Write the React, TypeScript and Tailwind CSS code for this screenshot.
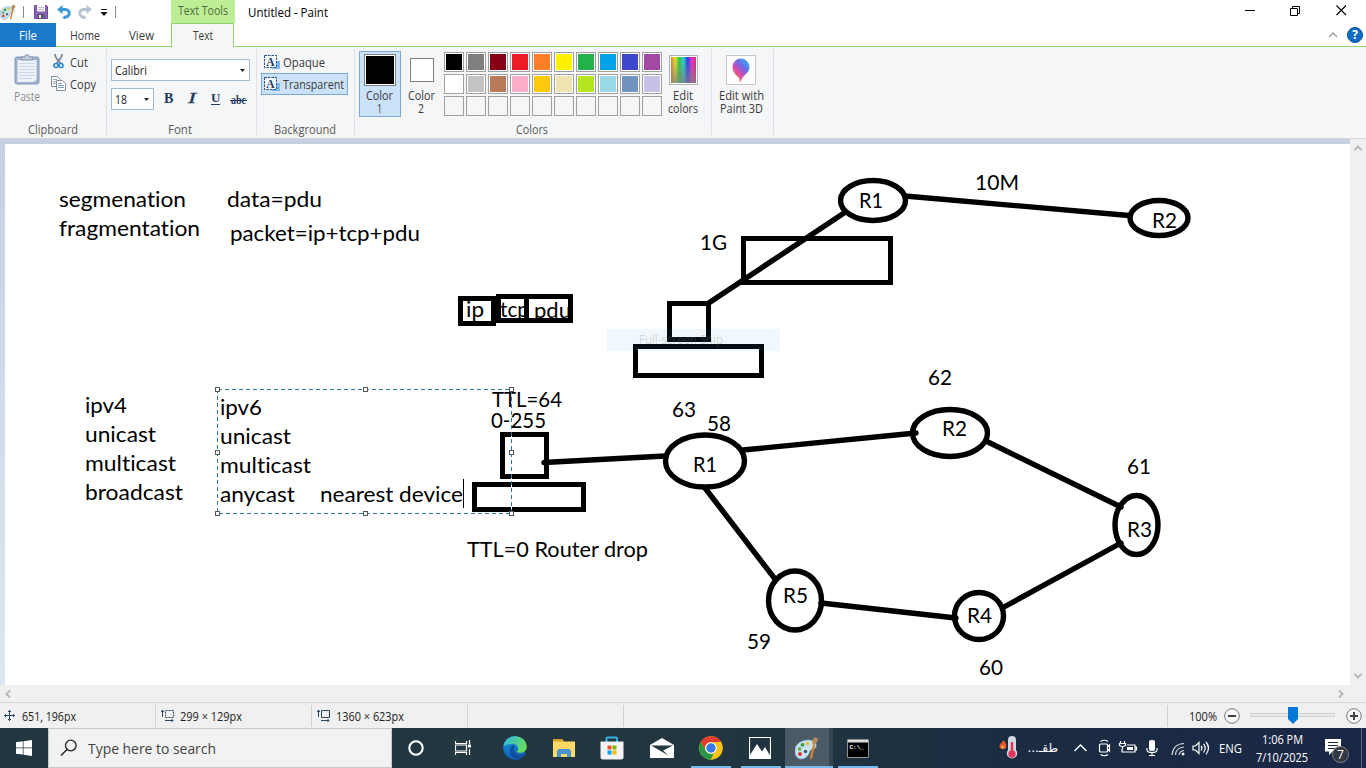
import React from "react";

const ui = '"Open Sans", "Noto Sans", sans-serif';

/* One-line label squeezed or stretched to a fixed width */
function Label({ w, children, size = 12, color = "#3b3b3b", h = 15 }: any) {
  return (
    <svg width={w} height={h} className="block shrink-0 overflow-visible">
      <text x="0" y={h - 3.5} textLength={w} lengthAdjust="spacingAndGlyphs" fontFamily={ui} fontSize={size} fill={color}>
        {children}
      </text>
    </svg>
  );
}

const palette = [
  ["#000000", "#7f7f7f", "#880015", "#ed1c24", "#ff7f27", "#fff200", "#22b14c", "#00a2e8", "#3f48cc", "#a349a4"],
  ["#ffffff", "#c3c3c3", "#b97a57", "#ffaec9", "#ffc90e", "#efe4b0", "#b5e61d", "#99d9ea", "#7092be", "#c8bfe7"],
  ["#f5f6f7", "#f5f6f7", "#f5f6f7", "#f5f6f7", "#f5f6f7", "#f5f6f7", "#f5f6f7", "#f5f6f7", "#f5f6f7", "#f5f6f7"],
];

function PaletteIcon({ size }: { size: number }) {
  return (
    <svg width={size} height={size} viewBox="0 0 24 24" className="block shrink-0">
      <path d="M0 16C-1 9 6 4 13 4c6 0 9 3 8 7-1 3-5 1-6 4-1 4-4 8-9 8-3 0-6-3-6-7z" fill="#c9e2f2" stroke="#7fa9c6" strokeWidth=".8" />
      <circle cx="4.500" cy="13" r="1.900" fill="#6fae4d" />
      <circle cx="7.500" cy="8.800" r="1.900" fill="#3f9c3f" />
      <circle cx="12.500" cy="7.500" r="1.800" fill="#e5c22c" />
      <circle cx="5" cy="18" r="2" fill="#d83b2b" />
      <circle cx="10.500" cy="15.500" r="1.700" fill="#35536b" />
      <path d="M15 22l3-14 2.200.5-3 13.500-1.600 1.500z" fill="#d8842f" />
      <path d="M17.500 8c-.8-3 .5-5 2.500-7.500.3 1.500 1.500 2 3.500 2-.5 2-2 4-3.500 6z" fill="#b98a57" />
    </svg>
  );
}

function TitleBar() {
  return (
    <div className="flex h-[23px] bg-white">
      <div className="flex w-[171px] items-center pt-px">
        <PaletteIcon size={16} />
        <div className="ml-[7px] h-3 w-px bg-[#8a8a8a]" />
        <svg width="14" height="14" viewBox="0 0 14 14" className="ml-[10px] block">
          <path d="M.5.500h12l1 1v12h-13z" fill="#8a63b4" stroke="#6d4a9a" />
          <path d="M3 0h8v6.500H3z" fill="#f5f3fa" />
          <path d="M4 2.500h6M4 4.500h6" stroke="#b9b2c8" strokeWidth=".8" />
          <path d="M3.500 9h7v5h-7z" fill="#5d5673" />
          <path d="M5 10h2v3H5z" fill="#eee" />
        </svg>
        <svg width="14" height="14" viewBox="0 0 14 14" className="ml-[9px] block">
          <path d="M4 4.500h4.500a3.700 3.700 0 0 1 0 7.500L6.500 13.500" stroke="#3c9ad9" strokeWidth="3" fill="none" />
          <path d="M0 4.500L5.500 0v9z" fill="#3c9ad9" />
        </svg>
        <svg width="14" height="14" viewBox="0 0 14 14" className="ml-[7px] block">
          <path d="M10 4.500H5.500a3.700 3.700 0 0 0 0 7.500L7.500 13.500" stroke="#b7c3d0" strokeWidth="3" fill="none" />
          <path d="M14 4.500L8.500 0v9z" fill="#b7c3d0" />
        </svg>
        <svg width="8" height="8" viewBox="0 0 8 8" className="ml-[8px] mt-[2px] block">
          <path d="M1 .500h6" stroke="#111" />
          <path d="M.5 3h7L4 7z" fill="#111" />
        </svg>
        <div className="ml-[7px] h-3 w-px bg-[#8a8a8a]" />
      </div>
      <div className="flex w-[64px] justify-center bg-[#bdee95] pt-[3px]">
        <Label w={50} color="#4f6b3a">Text Tools</Label>
      </div>
      <div className="ml-[13px] flex-1 pt-[5px]">
        <Label w={80} color="#000">Untitled - Paint</Label>
      </div>
      <div className="flex w-[137px] items-center">
        <svg width="137" height="23" className="block">
          <path d="M16 10.500h10" stroke="#000" />
          <path d="M61.500 8.500h7v7h-7zM63.500 8.500v-2h7v7h-2" stroke="#000" fill="none" />
          <path d="M107.500 5.500l9.500 9.500M117 5.500L107.500 15" stroke="#000" fill="none" strokeWidth="1.100" />
        </svg>
      </div>
    </div>
  );
}

function Tabs() {
  return (
    <div className="flex h-6 bg-white">
      <div className="flex w-14 shrink-0 justify-center bg-[#1979ca] pt-[5px]">
        <Label w={18} color="#fff">File</Label>
      </div>
      <div className="flex w-[115px] shrink-0 border-b border-[#92d36e]">
        <div className="ml-[14px] pt-[5px]"><Label w={30}>Home</Label></div>
        <div className="ml-[29px] pt-[5px]"><Label w={25}>View</Label></div>
      </div>
      <div className="flex w-[63px] shrink-0 justify-center border-x border-t border-[#92d36e] bg-[#f5f6f7] pt-[4px]">
        <Label w={20}>Text</Label>
      </div>
      <div className="flex flex-1 items-center justify-end border-b border-[#92d36e] pr-[3px]">
        <svg width="10" height="8" viewBox="0 0 10 8" className="mr-[9px] block">
          <path d="M1 6l4-4 4 4" stroke="#9a9a9a" strokeWidth="1.300" fill="none" />
        </svg>
        <div className="flex h-4 w-4 items-center justify-center rounded-full border border-[#0b4f9b] bg-[#0f6cc4] font-['Open_Sans'] text-[12px] font-bold leading-none text-white">?</div>
      </div>
    </div>
  );
}

function Group({ w, name, nameW, children, shift = 0 }: any) {
  return (
    <div className="flex shrink-0 flex-col" style={{ width: w }}>
      <div className="h-[75px]">{children}</div>
      <div className="flex justify-center" style={{ paddingRight: shift }}>{name && <Label w={nameW} color="#5a5a5a">{name}</Label>}</div>
    </div>
  );
}

const Sep = () => <div className="mt-[2px] h-[86px] w-px shrink-0 bg-[#dfe1e4]" />;

function TextBgIcon() {
  return (
    <svg width="17" height="15" viewBox="0 0 17 15" className="block shrink-0">
      <path d="M8 6h8v8H8z" fill="#7db8f0" />
      <path d="M.5.500h12v12H.500z" fill="#f5f9fd" stroke="#24507d" strokeDasharray="2.500 1" />
      <text x="6.500" y="10.500" textAnchor="middle" fontFamily="Liberation Serif" fontWeight="700" fontSize="11.500" fill="#1e3a5f">A</text>
    </svg>
  );
}

function Ribbon() {
  return (
    <div className="flex h-[91px] bg-[#f5f6f7]">
      <Group w={106} name="Clipboard" nameW={50}>
        <div className="flex">
          <div className="flex w-[50px] flex-col items-center pl-[3px] pt-[7px]">
            <svg width="26" height="31" viewBox="0 0 26 31" className="block">
              <rect x="1" y="3" width="24" height="27" rx="2" fill="#9fb2cf" stroke="#8499b8" />
              <path d="M3.500 6h19v20l-3 2h-16z" fill="#edf2f9" />
              <path d="M5 9.500h16M5 12.500h16M5 15.500h16M5 18.500h16M5 21.500h16M5 24.500h13" stroke="#cbd6e6" />
              <path d="M7 6V3h3.500l1-2h3l1 2H19v3z" fill="#c1cbd9" stroke="#8393ac" />
            </svg>
            <div className="mt-[4px]"><Label w={26} color="#8b8b8b">Paste</Label></div>
          </div>
          <div className="flex flex-col pt-[6px]">
            <div className="flex h-[22px] items-start">
              <svg width="20" height="16" viewBox="0 0 20 16" className="block">
                <path d="M5 1c0 4 3 6 5.500 9.500M12 1c0 4-3 6-5.500 9.500" stroke="#76879c" strokeWidth="1.700" fill="none" />
                <circle cx="6" cy="12.500" r="2" fill="none" stroke="#2685cf" strokeWidth="1.600" />
                <circle cx="11" cy="12.500" r="2" fill="none" stroke="#2685cf" strokeWidth="1.600" />
              </svg>
              <div className="pt-[2px]"><Label w={18}>Cut</Label></div>
            </div>
            <div className="flex items-start">
              <svg width="18" height="17" viewBox="0 0 18 17" className="block">
                <path d="M1.500 1.500h6l3 3v7h-9z" fill="#fff" stroke="#858d96" />
                <path d="M3 4.500h4M3 6.500h4M3 8.500h4" stroke="#8ab" />
                <path d="M6.500 5.500h6l3 3v7h-9z" fill="#fff" stroke="#858d96" />
                <path d="M8 8.500h4M8 10.500h6M8 12.500h6" stroke="#7aa0cc" />
              </svg>
              <div className="pl-[2px] pt-[2px]"><Label w={26}>Copy</Label></div>
            </div>
          </div>
        </div>
      </Group>
      <Sep />
      <Group w={149} name="Font" nameW={24} shift={3}>
        <div className="flex flex-col pl-[4px] pt-[12px]">
          <div className="flex h-[22px] w-[139px] items-center justify-between border border-[#a7b9d1] bg-white pl-[3px] pr-[4px]">
            <Label w={32} color="#1e1e1e">Calibri</Label>
            <svg width="5" height="3"><path d="M0 0h5L2.500 3z" fill="#222" /></svg>
          </div>
          <div className="mt-[7px] flex h-[22px] items-center">
            <div className="flex h-[22px] w-[43px] items-center justify-between border border-[#a7b9d1] bg-white pl-[3px] pr-[4px]">
              <Label w={12} color="#1e1e1e">18</Label>
              <svg width="5" height="3"><path d="M0 0h5L2.500 3z" fill="#222" /></svg>
            </div>
            <svg width="96" height="22" className="block" fontFamily="Liberation Serif" fontSize="14" fontWeight="700" fill="#1e3a5f">
              <text x="10" y="15">B</text>
              <text x="34" y="15" fontStyle="italic" fontWeight="400" stroke="#1e3a5f" strokeWidth=".3" textLength="8" lengthAdjust="spacingAndGlyphs">I</text>
              <text x="57" y="14" fontSize="13">U</text>
              <path d="M57 16.500h9M76 12.500h17" stroke="#1e3a5f" />
              <text x="77" y="16" fontSize="12" textLength="15" lengthAdjust="spacingAndGlyphs">abc</text>
            </svg>
          </div>
        </div>
      </Group>
      <Sep />
      <Group w={97} name="Background" nameW={62} shift={2}>
        <div className="flex flex-col pl-[4px] pt-[4px]">
          <div className="flex h-[22px] items-center pl-[3px]">
            <TextBgIcon />
            <div className="pl-[2px]"><Label w={42}>Opaque</Label></div>
          </div>
          <div className="flex h-[22px] w-[87px] items-center border border-[#7aa9d8] bg-[#cbe1f8] pl-[2px]">
            <TextBgIcon />
            <div className="pl-[2px]"><Label w={61}>Transparent</Label></div>
          </div>
        </div>
      </Group>
      <Sep />
      <Group w={356} name="Colors" nameW={32} shift={2}>
        <div className="flex pl-[4px] pt-[4px]">
          <div className="flex h-[66px] w-[42px] flex-col items-center border border-[#7aa9d8] bg-[#cbe1f8] pr-px pt-[2px]">
            <div className="ml-px h-8 w-8 border border-[#7f7f7f] bg-white p-px"><div className="h-full w-full bg-black" /></div>
            <div className="mt-[4px]"><Label w={27} h={13}>Color</Label></div>
            <Label w={5} h={13}>1</Label>
          </div>
          <div className="flex h-[66px] w-[42px] flex-col items-center pr-[2px] pt-[7px]">
            <div className="ml-px h-6 w-6 border border-[#7f7f7f] bg-white" />
            <div className="mt-[8px]"><Label w={27} h={13}>Color</Label></div>
            <Label w={6} h={13}>2</Label>
          </div>
          <div className="ml-px mt-px grid h-[64px] w-[218px] grid-cols-[repeat(10,20px)] grid-rows-[repeat(3,20px)] gap-[2px]">
            {palette.flat().map((c, i) => (
              <div key={i} className={"border border-[#a0a0a0] p-px " + (i < 20 ? "bg-white" : "bg-[#f5f6f7]")}>
                <div className="h-full w-full" style={{ background: c }} />
              </div>
            ))}
          </div>
          <div className="ml-[4px] flex w-[34px] flex-col items-center pt-[4px]">
            <div className="h-[30px] w-[29px] border border-[#aeb2b6] bg-white p-px">
              <div className="h-full w-full bg-[linear-gradient(to_right,#e87a24,#e8e82a,#31c93b,#2ad3d3,#2b35e8,#e82be0,#e8254a)]">
                <div className="h-full w-full bg-[linear-gradient(to_bottom,rgba(128,128,128,0),rgba(128,128,128,.75))]" />
              </div>
            </div>
            <div className="mt-[5px]"><Label w={20} h={13}>Edit</Label></div>
            <Label w={30} h={13}>colors</Label>
          </div>
        </div>
      </Group>
      <Sep />
      <Group w={61}>
        <div className="flex flex-col items-center pr-[3px] pt-[8px]">
          <div className="flex h-[30px] w-[30px] items-center justify-center border border-[#c4c7ca] bg-white">
            <svg width="18" height="25" viewBox="0 0 18 25" className="block">
              <defs>
                <linearGradient id="pin" x1="1" y1="0" x2="0.200" y2="1">
                  <stop offset="0" stopColor="#2ec5f5" />
                  <stop offset=".4" stopColor="#6a6be8" />
                  <stop offset=".65" stopColor="#d64bb0" />
                  <stop offset="1" stopColor="#f58a2a" />
                </linearGradient>
              </defs>
              <path d="M9 .500a8.500 8.500 0 0 1 8.500 8.500c0 5-4 7-6.500 10l-3 5.500c-1-2 .5-3-1.500-5C3 16.500.500 13.500.500 9A8.500 8.500 0 0 1 9 .500z" fill="url(#pin)" />
            </svg>
          </div>
          <div className="mt-[5px]"><Label w={45} h={13}>Edit with</Label></div>
          <Label w={43} h={13}>Paint 3D</Label>
        </div>
      </Group>
      <Sep />
    </div>
  );
}

/* text, x, baseline, width */
const notes: [string, number, number, number][] = [
  ["segmenation", 59, 207, 127],
  ["fragmentation", 59, 236, 141],
  ["data=pdu", 227, 207, 95],
  ["packet=ip+tcp+pdu", 230, 241, 190],
  ["ip", 466, 317, 18],
  ["tcp", 500, 317, 29],
  ["pdu", 534, 318, 37],
  ["10M", 975, 190, 44],
  ["1G", 700, 250, 27],
  ["R1", 859, 208, 24],
  ["R2", 1152, 228, 25],
  ["ipv4", 85, 413, 42],
  ["unicast", 85, 442, 71],
  ["multicast", 85, 471, 91],
  ["broadcast", 85, 500, 98],
  ["ipv6", 220, 415, 42],
  ["unicast", 220, 444, 71],
  ["multicast", 220, 473, 91],
  ["anycast", 220, 502, 75],
  ["nearest device", 320, 502, 143],
  ["TTL=64", 492, 407, 70],
  ["0-255", 491, 428, 55],
  ["63", 672, 417, 24],
  ["58", 707, 431, 24],
  ["R1", 693, 472, 24],
  ["62", 928, 385, 24],
  ["R2", 942, 436, 25],
  ["61", 1127, 474, 24],
  ["R3", 1127, 537, 25],
  ["R4", 967, 623, 25],
  ["60", 979, 675, 24],
  ["R5", 783, 603, 25],
  ["59", 747, 649, 24],
  ["TTL=0 Router drop", 467, 557, 181],
];

const handles = [[217, 389], [365, 389], [511, 389], [217, 452], [511, 452], [217, 513], [365, 513], [511, 513]];

function Drawing() {
  return (
    <svg width="1345" height="541" viewBox="5 144 1345 541" className="block shrink-0 bg-white">
      <g fontFamily='Lato, "Open Sans", sans-serif' fontSize="21.500" fill="#000" className="[font-variant-ligatures:none]">
        {notes.map(([t, x, y, w], i) => (
          <text key={i} x={x} y={y} textLength={w} lengthAdjust="spacingAndGlyphs">{t}</text>
        ))}
      </g>
      <g fill="none" stroke="#000" strokeWidth="5">
        <path d="M460.500 298.500h33v25h-33zM498.500 296.500h28v24h-28zM526.500 296.500h44v24h-44z" />
        <path d="M669.500 303.500h39v36h-39zM635.500 346.500h126v29h-126zM743.500 238.500h147v44h-147z" />
        <path d="M502.500 434.500h44v42h-44zM474.500 484.500h109v25h-109z" />
        <g strokeWidth="5.400">
          <ellipse cx="873" cy="200.500" rx="32.500" ry="20" />
          <ellipse cx="1159" cy="218" rx="29" ry="17.500" />
          <ellipse cx="705" cy="461" rx="39.500" ry="26" />
          <ellipse cx="950" cy="433" rx="37.500" ry="23.500" />
          <ellipse cx="1136.500" cy="525" rx="21.500" ry="29.500" />
          <ellipse cx="979" cy="616" rx="24.500" ry="23.500" />
          <ellipse cx="795" cy="600.500" rx="26.500" ry="29.500" />
          <path strokeLinecap="round" d="M708 303.500L844 213M905 196L1129 215.500M544 462.500L665 456M743 450L916 433M986 441L1121 507M1121 543L1004 607M956 618L821 603M705 488L775 579" />
        </g>
      </g>
      <rect x="607" y="329" width="173" height="22" fill="#4aa0e8" fillOpacity=".08" />
      <text x="639" y="344" textLength="84" lengthAdjust="spacingAndGlyphs" fontFamily={ui} fontSize="12" fill="#777" fillOpacity=".3">Full-screen Snip</text>
      <path d="M511.500 432v5M511.500 474v5M511.500 482v5M511.500 507v5" stroke="#fff" />
      <g shapeRendering="crispEdges">
        <path d="M217.500 389.500h294v124h-294z" fill="none" stroke="#2b7a9b" strokeDasharray="4 3" />
        {handles.map(([x, y], i) => (
          <rect key={i} x={x - 1.5} y={y - 1.5} width="4" height="4" fill="#fff" stroke="#555" />
        ))}
        <path d="M463.500 479v29" stroke="#000" />
      </g>
    </svg>
  );
}

function Chevron({ d }: { d: string }) {
  return <svg width="10" height="10" viewBox="0 0 10 10" className="block"><path d={d} stroke="#b9b9b9" strokeWidth="2" fill="none" /></svg>;
}

function Workspace() {
  return (
    <div className="flex h-[564px] flex-col border-t border-[#d5d9de]">
      <div className="flex h-[546px]">
        <div className="flex w-[1350px] bg-[linear-gradient(to_bottom,#c7d0e0,#dde7f3)] pl-[5px] pt-[5px]">
          <Drawing />
        </div>
        <div className="flex w-4 flex-col items-center justify-between bg-[#f0f0f0] pb-[4px] pr-px pt-[4px]">
          <Chevron d="M1.500 7L5 3.500 8.500 7" />
          <Chevron d="M1.500 3L5 6.500 8.500 3" />
        </div>
      </div>
      <div className="flex h-[17px] items-center justify-between bg-[#f0f0f0] pl-[3px] pr-[20px]">
        <Chevron d="M7 1.500L3.500 5 7 8.500" />
        <Chevron d="M3 1.500L6.500 5 3 8.500" />
      </div>
    </div>
  );
}

function StatusBar() {
  return (
    <div className="flex h-[26px] items-center border-t border-[#d7d7d7] bg-[#f0f0f0]">
      <div className="flex h-[22px] w-[156px] shrink-0 items-center border-r border-[#d0d0d0] pl-[4px]">
        <svg width="11" height="11" viewBox="0 0 11 11"><path d="M5.500 0v11M0 5.500h11M4 2l1.500-1.500L7 2M4 9l1.500 1.500L7 9M2 4L.500 5.500 2 7M9 4l1.500 1.500L9 7" stroke="#2c4565" fill="none" /></svg>
        <div className="pl-[7px] pt-px"><Label w={54} color="#222">651, 196px</Label></div>
      </div>
      <div className="flex h-[22px] w-[156px] shrink-0 items-center border-r border-[#d0d0d0] pl-[5px]">
        <svg width="14" height="13" viewBox="0 0 14 13"><path d="M1.500 8V1M0 3l1.500-2L3 3M4 11.500h8M10.500 10l1.500 1.500-1.500 1.500" stroke="#2c4565" fill="none" /><path d="M4.500 1.500h8v7h-8z" fill="none" stroke="#2c4565" strokeDasharray="2 1" /></svg>
        <div className="pl-[5px] pt-px"><Label w={62} color="#222">299 × 129px</Label></div>
      </div>
      <div className="flex h-[22px] w-[156px] shrink-0 items-center border-r border-[#d0d0d0] pl-[5px]">
        <svg width="14" height="13" viewBox="0 0 14 13"><path d="M1.500 8V1M0 3l1.500-2L3 3M4 11.500h8M10.500 10l1.500 1.500-1.500 1.500M4.500 1.500h8v7h-8z" stroke="#2c4565" fill="none" /></svg>
        <div className="pl-[5px] pt-px"><Label w={68} color="#222">1360 × 623px</Label></div>
      </div>
      <div className="h-[22px] w-[156px] shrink-0 border-r border-[#d0d0d0]" />
      <div className="h-[22px] w-[544px] shrink-0 border-r border-[#d0d0d0]" />
      <div className="flex flex-1 items-center pl-[21px]">
        <div className="pt-px"><Label w={28} color="#222">100%</Label></div>
        <svg width="143" height="22" className="ml-[6px] block shrink-0">
          <circle cx="9" cy="11" r="7.300" fill="#f8f8f8" stroke="#777" />
          <path d="M5 11h8" stroke="#444" strokeWidth="2" />
          <rect x="27.500" y="8.500" width="84" height="3" fill="#e7eaea" stroke="#d2d2d2" />
          <path d="M65 2h10v12l-5 5-5-5z" fill="#0078d7" />
          <circle cx="131" cy="11" r="7.300" fill="#f8f8f8" stroke="#777" />
          <path d="M127 11h8M131 7v8" stroke="#444" strokeWidth="2" />
        </svg>
      </div>
    </div>
  );
}

function AppSlot({ w = 49, children, bar = 0, className = "" }: any) {
  return (
    <div className={"flex h-10 shrink-0 flex-col items-center " + className} style={{ width: w }}>
      <div className="flex h-[38px] items-center justify-center pt-[2px]">{children}</div>
      {bar > 0 && <div className="h-[2px] bg-[#76b9ed]" style={{ width: bar }} />}
    </div>
  );
}

function Taskbar() {
  return (
    <div className="flex h-10 bg-[linear-gradient(to_right,#22373f_0%,#22373f_50%,#1b2c42_75%,#1a2746_100%)]">
      <div className="flex w-12 items-center justify-center">
        <svg width="16" height="16" viewBox="0 0 16 16" className="block"><path d="M0 2.300l6.800-1v6.300H0zM7.500 1.200L16 0v7.600H7.500zM0 8.300h6.800v6.300L0 13.700zM7.500 8.300H16V16l-8.500-1.200z" fill="#fff" /></svg>
      </div>
      <div className="flex w-[344px] items-center border border-[#c9c9c9] bg-[#f2f2f2] pl-[11px]">
        <svg width="18" height="18" viewBox="0 0 18 18" className="block"><circle cx="10.800" cy="6.500" r="5.300" fill="none" stroke="#222" strokeWidth="1.300" /><path d="M7 10.500L1 16.500" stroke="#222" strokeWidth="1.400" /></svg>
        <div className="pl-[10px]"><Label w={128} size={14.5} h={18} color="#444">Type here to search</Label></div>
      </div>
      <div className="flex flex-1">
        <AppSlot w={48}><svg width="16" height="16" viewBox="0 0 16 16"><circle cx="8" cy="8" r="6.700" fill="none" stroke="#fff" strokeWidth="2.100" /></svg></AppSlot>
        <AppSlot w={48}>
          <svg width="17" height="16" viewBox="0 0 17 16" className="-ml-px"><path d="M.5 1v2.500h11V1M.5 15v-2.500h11V15M.5 5h11v6H.500zM14.500 0v4M14.500 9v6" stroke="#fff" strokeWidth="1.200" fill="none" /><path d="M13 4.500h3v3h-3z" fill="#fff" /></svg>
        </AppSlot>
        <AppSlot w={54}>
          <svg width="24" height="24" viewBox="0 0 24 24">
            <defs>
              <linearGradient id="eg" x1="0" y1="0" x2="1" y2=".4"><stop offset="0" stopColor="#2bb8ea" /><stop offset="1" stopColor="#66dd62" /></linearGradient>
              <linearGradient id="eb" x1="0" y1="0" x2="0" y2="1"><stop offset="0" stopColor="#1a9ee0" /><stop offset="1" stopColor="#0f5bb5" /></linearGradient>
            </defs>
            <path d="M12 .2A11.800 11.800 0 1 0 22.500 17.500l-1-1.500-6 .5-2-3 8-6A11.800 11.800 0 0 0 12 .2z" fill="url(#eb)" />
            <path d="M.3 11C1 4 6 .2 12 .2c7 0 12 5 11.800 10.800-.2 4-3.400 5.800-6.800 5.800-3 0-3.700-1.200-2.500-2.600 1.500-2.200.2-6.400-4.700-6.400C5 7.800 1.500 9 .3 11z" fill="url(#eg)" />
            <path d="M9.500 9c-5 4-2.500 13 4.500 14.500 3.500-.3 6.500-2.500 8.200-5.500-6 2-11 0-11.200-4-.2-2 .5-3 1-3.500-.5-1-1.500-1.500-2.500-1.500z" fill="#124f9e" />
          </svg>
        </AppSlot>
        <AppSlot w={44}>
          <svg width="22" height="19" viewBox="0 0 22 19"><path d="M0 0h9l2 2.500h11V18H0z" fill="#ffd968" /><path d="M0 0h9l2 2.500H0z" fill="#dda223" /><path d="M4 18v-6l1.500-2h11l1.500 2v6h-4v-3H8v3z" fill="#4a93cf" /></svg>
        </AppSlot>
        <AppSlot w={52}>
          <svg width="24" height="24" viewBox="0 0 24 24"><path d="M6.500 7V2.500q0-1 1-1h8.500q1 0 1 1V7" fill="none" stroke="#35b4e8" strokeWidth="2" /><path d="M.5 5.500h23V21q0 2.500-2.500 2.500H3Q.5 23.500.500 21z" fill="#f3f3f3" /><path d="M7.500 9.500h4v4h-4z" fill="#f25022" /><path d="M12.500 9.500h4v4h-4z" fill="#7fba00" /><path d="M7.500 14.500h4v4h-4z" fill="#00a4ef" /><path d="M12.500 14.500h4v4h-4z" fill="#ffb900" /></svg>
        </AppSlot>
        <AppSlot w={48}>
          <svg width="24" height="20" viewBox="0 0 24 20"><path d="M0 7L12 0l12 7v13H0z" fill="#fff" /><path d="M1 7.500h22l-10 5 5.500 5L1 7.500z" fill="#22373f" /></svg>
        </AppSlot>
        <AppSlot w={50} bar={40}>
          <svg width="24" height="24" viewBox="0 0 24 24"><circle cx="12" cy="12" r="11.800" fill="#fbc116" /><path d="M1.800 6.100A11.800 11.800 0 0 1 22.200 6.100H12a5.900 5.900 0 0 0-5.100 8.900z" fill="#e33b2e" /><path d="M1.800 6.100L6.900 15a5.900 5.900 0 0 0 5.100 2.900h2.500L11.500 23.800A11.800 11.800 0 0 1 1.800 6.100z" fill="#279847" /><circle cx="12" cy="12" r="5.800" fill="#fff" /><circle cx="12" cy="12" r="4.700" fill="#367be8" /></svg>
        </AppSlot>
        <AppSlot w={49} bar={40}>
          <svg width="22" height="22" viewBox="0 0 22 22" className="-ml-[2px]"><path d="M.5.500h21v21H.500z" fill="none" stroke="#fff" strokeWidth="1.200" /><path d="M1 21V18l7-11 5 7.500 3-4.500 5 8.500V21z" fill="#fff" /></svg>
        </AppSlot>
        <AppSlot w={44} bar={44} className="bg-[#4b5b66]"><PaletteIcon size={24} /></AppSlot>
        <AppSlot w={4} bar={4} className="bg-[#33454f]" />
        <AppSlot w={49} bar={40}>
          <svg width="22" height="19" viewBox="0 0 22 19"><path d="M.5.500h21v18H.500z" fill="#000" stroke="#909090" /><path d="M1 1h20v2.500H1z" fill="#ddd" /><text x="2.500" y="9.500" fontFamily="Liberation Mono" fontWeight="700" fontSize="6" fill="#fff">C:\_</text></svg>
        </AppSlot>
      </div>
      <div className="flex w-[368px] items-center">
        <svg width="20" height="24" viewBox="0 0 20 24" className="ml-px block shrink-0">
          <path d="M4 4c3 3 4 5 3 7.500C6 14 1 13.500.500 11c-.3-2 1-2.500 1.500-4 .8.500 1.500-1 2-3z" fill="#f0562b" />
          <path d="M3.500 9c1.500 1 1.500 3.500 0 3.500s-1.500-2 0-3.500z" fill="#ffc14a" />
          <path d="M9 4a4 4 0 0 1 8 0v10a5.200 5.200 0 1 1-8 0z" fill="#cfdae6" />
          <circle cx="13" cy="18" r="3.700" fill="#e0345b" /><path d="M13 6v11" stroke="#e0345b" strokeWidth="2.500" />
        </svg>
        <div dir="rtl" className="ml-[10px] w-[29px] shrink-0 whitespace-nowrap font-['DejaVu_Sans'] text-[12px] leading-none text-white">طقـ...</div>
        <svg width="160" height="40" className="ml-[16px] block shrink-0" fill="none" stroke="#fff" strokeWidth="1.200">
          <path d="M.5 23L6.500 17l6 6" strokeWidth="1.400" />
          <path d="M26.500 16h6q1 0 1 1v6q0 1-1 1h-6q-1 0-1-1v-6q0-1 1-1zM33.500 19l2-2v6l-2-2M26.500 13.500q4-2.500 7.500 0M26.500 26.500q4 2.500 7.500 0" />
          <path d="M53 17h8v7H48v-3M61 19h1.500v3H61" /><path d="M53 19h6v3h-6z" fill="#fff" stroke="none" /><path d="M46.500 13v2.500M50.500 13v2.500M45.500 15.500h6v2q-3 2-6 0zM48.500 18v3" />
          <rect x="75" y="12" width="6" height="11" rx="2" fill="#fff" stroke="none" /><path d="M73 20v2q0 2.500 5 2.500t5-2.500v-2M78 25v3M75 27.500h6" />
          <path d="M98 27q1-11 12-11.500M101.500 27q.5-7.500 8.500-8M105 27q.5-4 5-4.500" stroke="#cfd3da" /><circle cx="109" cy="26" r="1.500" fill="#fff" stroke="none" />
          <path d="M119 18h2.500l3.500-3.500v11L121.500 22H119zM127 18q2 2 0 4.500M129.500 16q3.500 4 0 8.500M132 14q5 6 0 12.500" />
        </svg>
        <div className="-ml-[15px]"><Label w={23} color="#fff" h={16}>ENG</Label></div>
        <div className="ml-[14px] flex w-[52px] shrink-0 flex-col items-center gap-[3px]">
          <Label w={41} color="#fff">1:06 PM</Label>
          <Label w={52} color="#fff">7/10/2025</Label>
        </div>
        <svg width="26" height="26" viewBox="0 0 26 26" className="ml-[17px] mt-[6px] block shrink-0">
          <path d="M0 1h16v12.500H7.500L4 17v-3.500H0z" fill="#fff" /><path d="M3 4.500h10M3 7.500h10M3 10.500h7" stroke="#1a2746" strokeWidth="1.200" />
          <circle cx="15.500" cy="16.500" r="8" fill="#34383f" stroke="#7b8088" /><text x="15.500" y="21" textAnchor="middle" fontFamily={ui} fontSize="12" fill="#fff">7</text>
        </svg>
        <div className="ml-[10px] h-10 w-px bg-[#5c6679]" />
      </div>
    </div>
  );
}

export default function App() {
  return (
    <div className="flex h-[768px] w-[1366px] flex-col overflow-hidden bg-white">
      <TitleBar />
      <Tabs />
      <Ribbon />
      <Workspace />
      <StatusBar />
      <Taskbar />
    </div>
  );
}
